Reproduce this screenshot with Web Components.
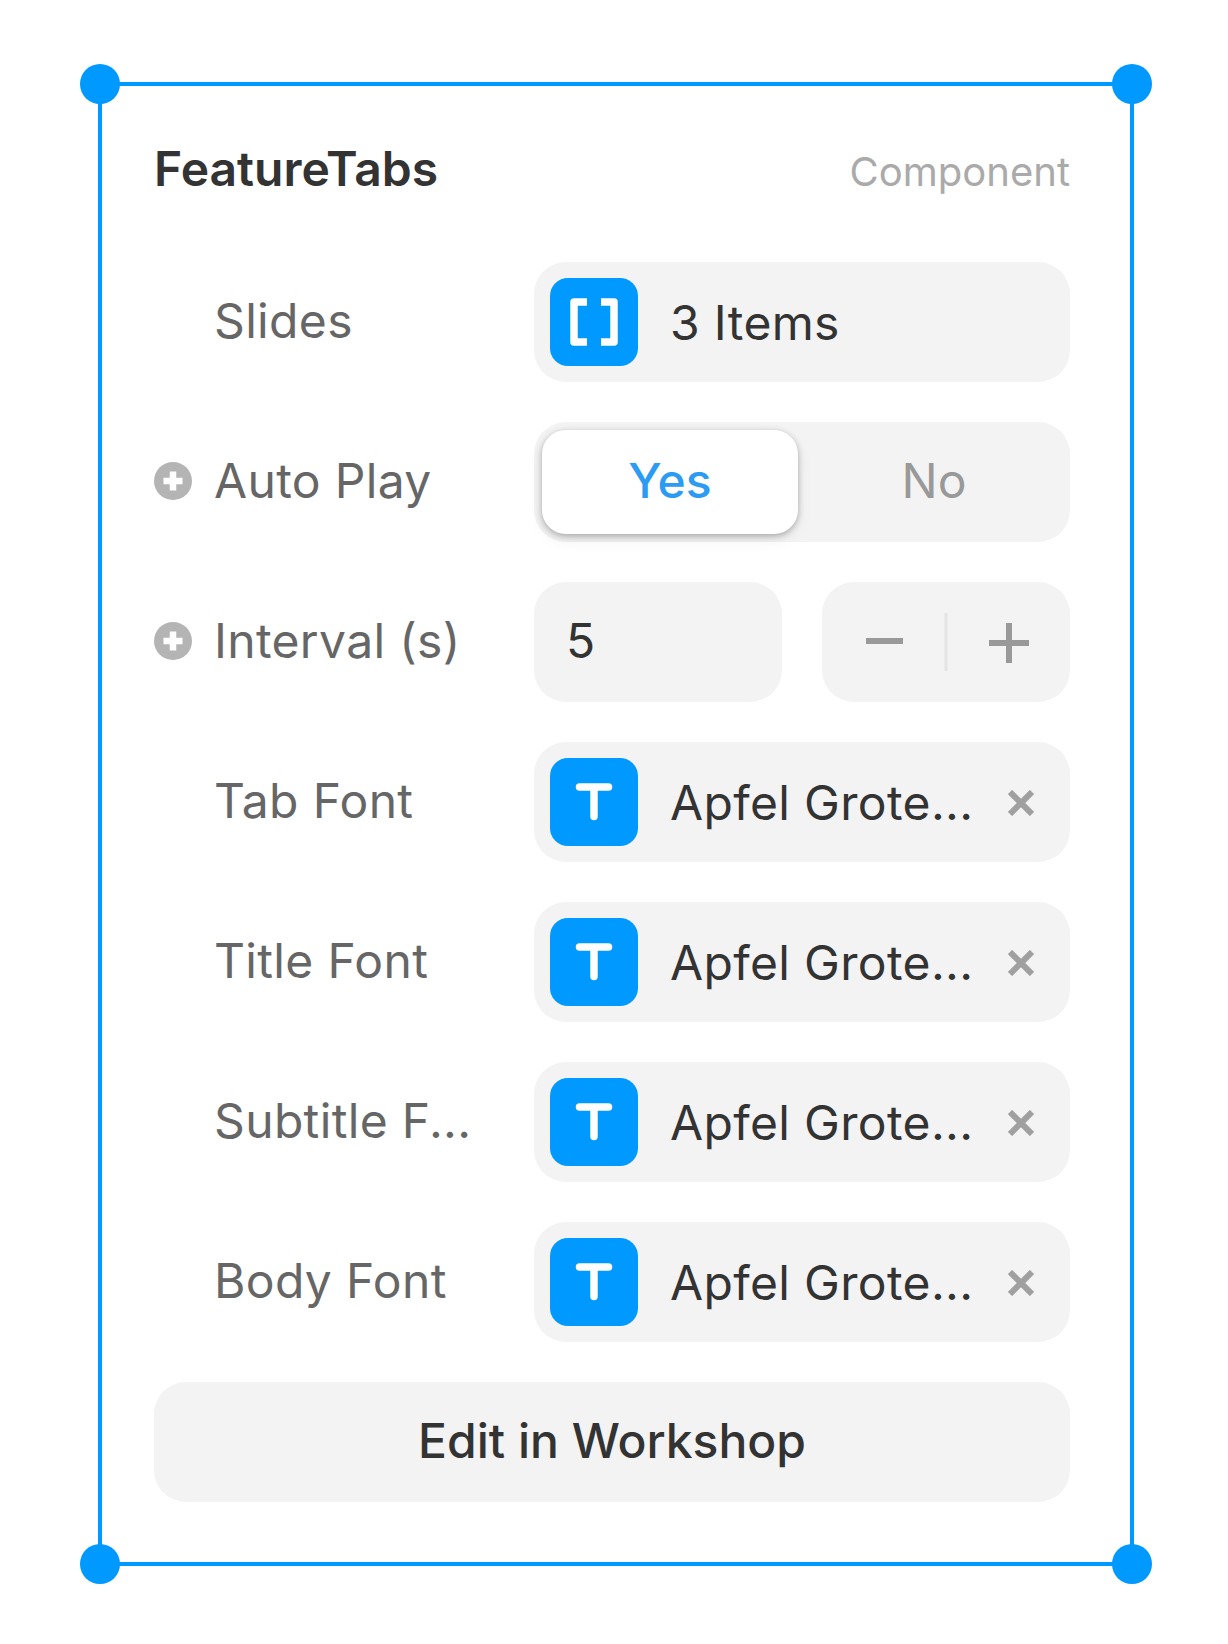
<!DOCTYPE html>
<html>
<head>
<meta charset="utf-8">
<title>FeatureTabs</title>
<style>
  html, body { margin: 0; background: #fff; }
  body { padding: 82px 94px 78px 98px; font-family: Inter, "Liberation Sans", sans-serif; }
</style>
</head>
<body>
<feature-panel title-text="FeatureTabs" kind="Component">
  <prop-row label="Slides">
    <value-pill icon="array" text="3 Items"></value-pill>
  </prop-row>
  <prop-row label="Auto Play" addable>
    <yes-no-toggle></yes-no-toggle>
  </prop-row>
  <prop-row label="Interval (s)" addable>
    <number-stepper value="5"></number-stepper>
  </prop-row>
  <prop-row label="Tab Font">
    <value-pill icon="type" text="Apfel Grote..." clearable></value-pill>
  </prop-row>
  <prop-row label="Title Font">
    <value-pill icon="type" text="Apfel Grote..." clearable></value-pill>
  </prop-row>
  <prop-row label="Subtitle F...">
    <value-pill icon="type" text="Apfel Grote..." clearable></value-pill>
  </prop-row>
  <prop-row label="Body Font">
    <value-pill icon="type" text="Apfel Grote..." clearable></value-pill>
  </prop-row>
  <wide-button>Edit in Workshop</wide-button>
</feature-panel>

<script>
const BLUE = '#0099ff';

class FeaturePanel extends HTMLElement {
  connectedCallback() {
    const root = this.attachShadow({ mode: 'open' });
    root.innerHTML = `<style>
      :host {
        display: block;
        position: relative;
        box-sizing: border-box;
        width: 1036px;
        height: 1484px;
        border: 4px solid ${BLUE};
        padding: 52px 60px 0 52px;
      }
      header {
        display: flex;
        justify-content: space-between;
        align-items: center;
        height: 60px;
        margin-bottom: 64px;
      }
      h1 {
        margin: 0;
        padding-top: 2px;
        font: 600 48px/60px Inter, sans-serif;
        color: #333;
      }
      span {
        padding-top: 8px;
        font: 400 40px/60px Inter, sans-serif;
        color: #aaa;
      }
      .body { display: flex; flex-direction: column; gap: 40px; }
      i {
        position: absolute;
        width: 40px;
        height: 40px;
        border-radius: 50%;
        background: ${BLUE};
      }
      .tl { left: -22px; top: -22px; }
      .tr { right: -22px; top: -22px; }
      .bl { left: -22px; bottom: -22px; }
      .br { right: -22px; bottom: -22px; }
    </style>
    <header>
      <h1>${this.getAttribute('title-text')}</h1>
      <span>${this.getAttribute('kind')}</span>
    </header>
    <div class="body"><slot></slot></div>
    <i class="tl"></i><i class="tr"></i><i class="bl"></i><i class="br"></i>`;
  }
}
customElements.define('feature-panel', FeaturePanel);

class PropRow extends HTMLElement {
  connectedCallback() {
    const root = this.attachShadow({ mode: 'open' });
    // the plus only shows on optional props
    const plus = this.hasAttribute('addable') ? `<svg viewBox="0 0 38 38" width="38" height="38">
        <circle cx="19" cy="19" r="19" fill="#b4b4b4"/>
        <path d="M19 9.5v19M9.5 19h19" stroke="#fff" stroke-width="6.5"/>
      </svg>` : '';
    root.innerHTML = `<style>
      :host {
        display: grid;
        grid-template-columns: 380px 536px;
        height: 120px;
        align-items: center;
      }
      .label {
        display: flex;
        align-items: center;
        padding: 0 0 2px 60px;
        position: relative;
        font: 400 48px/60px Inter, sans-serif;
        letter-spacing: .35px;
        color: #666;
        white-space: nowrap;
      }
      svg { position: absolute; left: 0; top: 11px; }
    </style>
    <div class="label">${plus}<span>${this.getAttribute('label')}</span></div>
    <slot></slot>`;
  }
}
customElements.define('prop-row', PropRow);

class ValuePill extends HTMLElement {
  connectedCallback() {
    const root = this.attachShadow({ mode: 'open' });
    const icons = {
      array: `<path d="M37 24H24v40h13M51 24h13v40H51" fill="none" stroke="#fff" stroke-width="7.5" stroke-linejoin="round"/>`,
      type: `<path d="M29.5 29h29M44 29v29.5" fill="none" stroke="#fff" stroke-width="7.5" stroke-linecap="round"/>`
    };
    const clear = this.hasAttribute('clearable') ? `<svg class="x" viewBox="0 0 26 26" width="26" height="26">
        <path d="M2 2l22 22M24 2L2 24" stroke="#a0a0a0" stroke-width="6"/>
      </svg>` : '';
    root.innerHTML = `<style>
      :host {
        display: flex;
        align-items: center;
        height: 120px;
        padding: 0 36px 0 16px;
        box-sizing: border-box;
        background: #f3f3f3;
        border-radius: 32px;
      }
      .tile {
        flex: none;
        width: 88px;
        height: 88px;
        background: ${BLUE};
        border-radius: 18px;
      }
      .text {
        flex: 1;
        margin-left: 32px;
        padding-top: 2px;
        font: 400 48px/60px Inter, sans-serif;
        letter-spacing: .35px;
        color: #333;
        white-space: nowrap;
      }
      .x { flex: none; margin-top: 2px; }
    </style>
    <svg class="tile" viewBox="0 0 88 88">${icons[this.getAttribute('icon')]}</svg>
    <span class="text">${this.getAttribute('text')}</span>
    ${clear}`;
  }
}
customElements.define('value-pill', ValuePill);

class YesNoToggle extends HTMLElement {
  connectedCallback() {
    const root = this.attachShadow({ mode: 'open' });
    root.innerHTML = `<style>
      :host {
        display: grid;
        grid-template-columns: 1fr 1fr;
        gap: 8px;
        height: 120px;
        padding: 8px;
        box-sizing: border-box;
        background: #f3f3f3;
        border-radius: 32px;
      }
      div {
        display: flex;
        align-items: center;
        justify-content: center;
        padding-bottom: 2px;
        font: 400 48px/60px Inter, sans-serif;
        color: #999;
        border-radius: 24px;
      }
      .on {
        font-weight: 500;
        background: #fff;
        color: #2b9bf4;
        box-shadow: 0 2px 6px rgba(0,0,0,.28), 0 6px 16px rgba(0,0,0,.06);
      }
    </style>
    <div class="on">Yes</div>
    <div>No</div>`;
  }
}
customElements.define('yes-no-toggle', YesNoToggle);

class NumberStepper extends HTMLElement {
  connectedCallback() {
    const root = this.attachShadow({ mode: 'open' });
    root.innerHTML = `<style>
      :host {
        display: grid;
        grid-template-columns: 1fr 1fr;
        gap: 40px;
        height: 120px;
      }
      .field, .step {
        background: #f3f3f3;
        border-radius: 32px;
      }
      .field {
        display: flex;
        align-items: center;
        padding: 0 0 2px 32px;
        font: 400 48px/60px Inter, sans-serif;
        color: #333;
      }
      .step {
        display: flex;
        align-items: center;
        justify-content: center;
      }
      svg { display: block; }
    </style>
    <div class="field">${this.getAttribute('value')}</div>
    <div class="step">
      <svg viewBox="0 0 248 120" width="248" height="120">
        <path d="M44 59h37M167 61h40M187 41v40" fill="none" stroke="#999" stroke-width="6"/>
        <path d="M124 31v58" fill="none" stroke="#e4e4e4" stroke-width="3"/>
      </svg>
    </div>`;
  }
}
customElements.define('number-stepper', NumberStepper);

class WideButton extends HTMLElement {
  connectedCallback() {
    const root = this.attachShadow({ mode: 'open' });
    root.innerHTML = `<style>
      :host {
        display: flex;
        align-items: center;
        justify-content: center;
        box-sizing: border-box;
        height: 120px;
        padding-bottom: 2px;
        background: #f3f3f3;
        border-radius: 32px;
        font: 500 48px/60px Inter, sans-serif;
        color: #333;
      }
    </style>
    <slot></slot>`;
  }
}
customElements.define('wide-button', WideButton);
</script>
</body>
</html>
